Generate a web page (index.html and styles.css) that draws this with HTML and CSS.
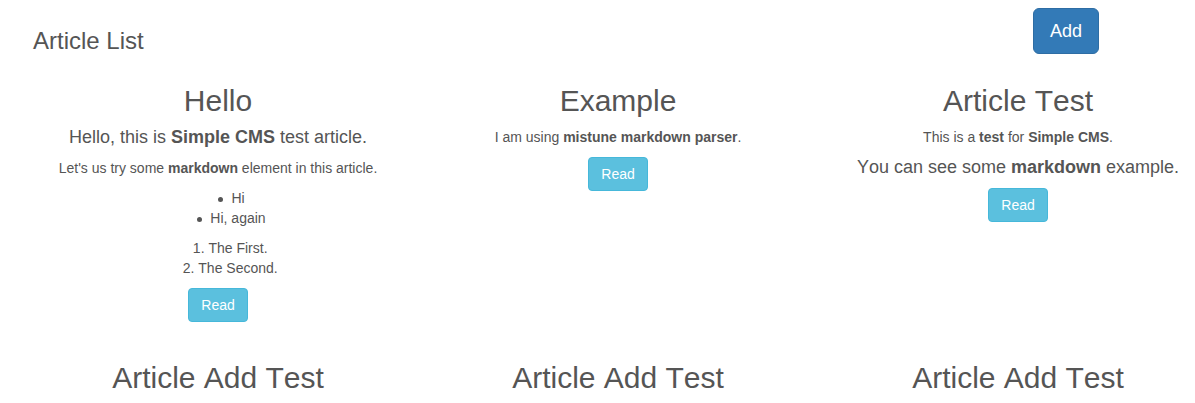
FILE: index.html
```html
<!DOCTYPE html>
<html lang="en">
<head>
<meta charset="utf-8">
<title>Article List</title>
<link rel="stylesheet" href="styles.css">
</head>
<body>
<div class="page">
  <header class="page-header">
    <h3 class="page-title">Article List</h3>
    <a class="btn btn-primary btn-lg" href="#">Add</a>
  </header>
  <main class="articles">
    <article class="article">
      <h2 class="article-title">Hello</h2>
      <div class="article-body">
        <h4>Hello, this is <strong>Simple CMS</strong> test article.</h4>
        <p>Let's us try some <strong>markdown</strong> element in this article.</p>
        <ul>
          <li>Hi</li>
          <li>Hi, again</li>
        </ul>
        <ol>
          <li>The First.</li>
          <li>The Second.</li>
        </ol>
      </div>
      <div class="article-actions"><a class="btn btn-info" href="#">Read</a></div>
    </article>
    <article class="article">
      <h2 class="article-title">Example</h2>
      <div class="article-body">
        <p>I am using <strong>mistune markdown parser</strong>.</p>
      </div>
      <div class="article-actions"><a class="btn btn-info" href="#">Read</a></div>
    </article>
    <article class="article">
      <h2 class="article-title">Article Test</h2>
      <div class="article-body">
        <p>This is a <strong>test</strong> for <strong>Simple CMS</strong>.</p>
        <h4>You can see some <strong>markdown</strong> example.</h4>
      </div>
      <div class="article-actions"><a class="btn btn-info" href="#">Read</a></div>
    </article>
    <article class="article">
      <h2 class="article-title">Article Add Test</h2>
      <div class="article-body">
        <p>Article add test.</p>
      </div>
      <div class="article-actions"><a class="btn btn-info" href="#">Read</a></div>
    </article>
    <article class="article">
      <h2 class="article-title">Article Add Test</h2>
      <div class="article-body">
        <p>Article add test.</p>
      </div>
      <div class="article-actions"><a class="btn btn-info" href="#">Read</a></div>
    </article>
    <article class="article">
      <h2 class="article-title">Article Add Test</h2>
      <div class="article-body">
        <p>Article add test.</p>
      </div>
      <div class="article-actions"><a class="btn btn-info" href="#">Read</a></div>
    </article>
  </main>
</div>
</body>
</html>
```

FILE: styles.css
```css
html, body {
  margin: 0;
  padding: 0;
  overflow-x: hidden;
  background: #fff;
}

body {
  font-family: "Liberation Sans", Arial, Helvetica, sans-serif;
  font-size: 14px;
  line-height: 20px;
  color: #555;
  font-kerning: none;
}

.page {
  width: 1218px;
}

.page-header {
  display: flex;
  align-items: flex-start;
  padding-left: 33px;
}

.page-title {
  flex: 1;
  margin: 28px 0 0;
  font-size: 24px;
  line-height: 26px;
  font-weight: 400;
}

.btn {
  display: inline-block;
  text-decoration: none;
  color: #fff;
  border: 1px solid transparent;
  white-space: nowrap;
}

.btn-primary {
  background: #337ab7;
  border-color: #2e6da4;
}

.btn-lg {
  margin: 8px 119px 0 0;
  padding: 10px 16px;
  font-size: 18px;
  line-height: 24px;
  border-radius: 6px;
}

.btn-info {
  background: #5bc0de;
  border-color: #46b8da;
  padding: 6px 12px;
  font-size: 14px;
  line-height: 20px;
  border-radius: 4px;
}

.articles {
  display: grid;
  grid-template-columns: repeat(3, 400px);
  row-gap: 39px;
  padding-left: 18px;
  margin-top: 30px;
}

.article {
  text-align: center;
}

.article-title {
  margin: 0 0 10px;
  font-size: 30px;
  line-height: 33px;
  font-weight: 400;
}

.article-body h4 {
  margin: 10px 0;
  font-size: 18px;
  line-height: 21px;
  font-weight: 400;
}

.article-body h4:first-child {
  margin-top: 0;
}

.article-body p {
  margin: 0 0 10px;
}

.article-body ul,
.article-body ol {
  margin: 0 0 10px;
  padding-left: 40px;
  list-style: none;
}

.article-body ol {
  counter-reset: item;
}

.article-body li {
  display: flex;
  justify-content: center;
  align-items: flex-start;
}

.article-body ul li::before {
  content: "";
  flex: none;
  width: 5px;
  height: 5px;
  margin: 9px 8px 0 -13px;
  border-radius: 50%;
  background: currentColor;
}

.article-body ol li {
  counter-increment: item;
}

.article-body ol li::before {
  content: counter(item) ".\00a0";
  display: flex;
  justify-content: flex-end;
  flex: none;
  width: 0;
  min-width: 0;
  white-space: nowrap;
}

.article-body strong {
  font-weight: 700;
}

.article-actions {
  display: flex;
  justify-content: center;
}
```
